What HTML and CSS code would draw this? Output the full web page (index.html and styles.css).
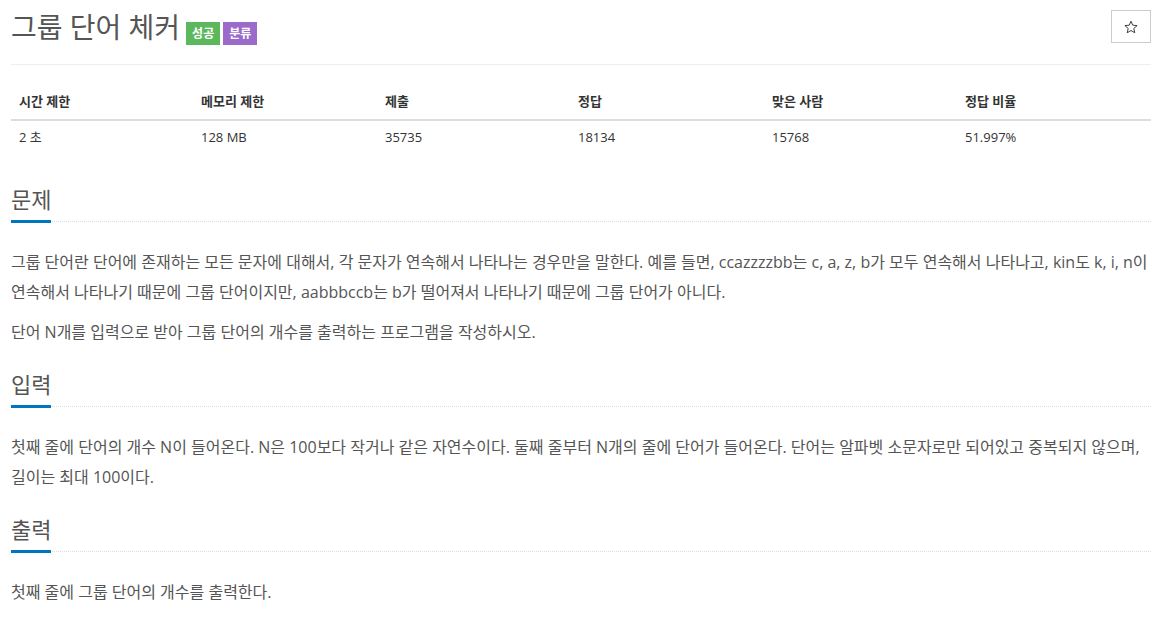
FILE: index.html
```html
<!DOCTYPE html>
<html lang="ko">
<head>
<meta charset="utf-8">
<title>그룹 단어 체커</title>
<link rel="stylesheet" href="styles.css">
</head>
<body>
<div class="container">
  <div class="page-header">
    <h1 class="title">
      <span class="title-text">그룹 단어 체커</span>
      <span class="label label-green">성공</span>
      <span class="label label-purple">분류</span>
    </h1>
    <button class="star-btn" type="button" aria-label="즐겨찾기">
      <svg width="14" height="14" viewBox="0 0 24 24"><polygon points="12,2 14.9,8.9 22.5,9.6 16.8,14.5 18.5,21.9 12,18 5.5,21.9 7.2,14.5 1.5,9.6 9.1,8.9" fill="none" stroke="#333" stroke-width="1.6" stroke-linejoin="miter"/></svg>
    </button>
  </div>

  <table class="info">
    <thead>
      <tr>
        <th class="c1">시간 제한</th>
        <th class="c2">메모리 제한</th>
        <th class="c3">제출</th>
        <th class="c4">정답</th>
        <th class="c5">맞은 사람</th>
        <th class="c6">정답 비율</th>
      </tr>
    </thead>
    <tbody>
      <tr>
        <td>2 초</td>
        <td>128 MB</td>
        <td>35735</td>
        <td>18134</td>
        <td>15768</td>
        <td>51.997%</td>
      </tr>
    </tbody>
  </table>

  <section class="section">
    <h2 class="headline"><span>문제</span></h2>
    <div class="text">
      <p>그룹 단어란 단어에 존재하는 모든 문자에 대해서, 각 문자가 연속해서 나타나는 경우만을 말한다. 예를 들면, ccazzzzbb는 c, a, z, b가 모두 연속해서 나타나고, kin도 k, i, n이 연속해서 나타나기 때문에 그룹 단어이지만, aabbbccb는 b가 떨어져서 나타나기 때문에 그룹 단어가 아니다.</p>
      <p>단어 N개를 입력으로 받아 그룹 단어의 개수를 출력하는 프로그램을 작성하시오.</p>
    </div>
  </section>

  <section class="section">
    <h2 class="headline"><span>입력</span></h2>
    <div class="text">
      <p>첫째 줄에 단어의 개수 N이 들어온다. N은 100보다 작거나 같은 자연수이다. 둘째 줄부터 N개의 줄에 단어가 들어온다. 단어는 알파벳 소문자로만 되어있고 중복되지 않으며, 길이는 최대 100이다.</p>
    </div>
  </section>

  <section class="section">
    <h2 class="headline"><span>출력</span></h2>
    <div class="text">
      <p>첫째 줄에 그룹 단어의 개수를 출력한다.</p>
    </div>
  </section>
</div>
</body>
</html>
```

FILE: styles.css
```css
* { box-sizing: border-box; }

html, body {
  margin: 0;
  padding: 0;
  background: #fff;
}

body {
  font-family: "Open Sans", "Noto Sans CJK KR", sans-serif;
  color: #333;
  font-size: 13px;
}

.container {
  width: 1140px;
  margin-left: 11px;
}

.page-header {
  display: flex;
  justify-content: space-between;
  align-items: flex-start;
  height: 65px;
  padding-top: 9px;
  border-bottom: 1px solid #eee;
}

.title {
  display: flex;
  align-items: flex-start;
  margin: 0;
  font-weight: normal;
}

.title-text {
  font-size: 28px;
  line-height: 36px;
  color: #555;
  margin-right: 6px;
}

.label {
  display: inline-block;
  margin-top: 13px;
  margin-right: 3px;
  height: 23px;
  min-width: 34px;
  padding: 0 6px;
  font-size: 12px;
  line-height: 23px;
  font-weight: bold;
  text-align: center;
  color: #fff;
}

.label-green { background: #5cb85c; }
.label-purple { background: #9b6bcc; }

.star-btn {
  width: 40px;
  height: 33px;
  margin-top: 1px;
  padding: 0;
  border: 1px solid #ccc;
  background: #fff;
  display: flex;
  align-items: center;
  justify-content: center;
  cursor: pointer;
}

.info {
  width: 1140px;
  margin-top: 18px;
  margin-bottom: 17px;
  border-collapse: collapse;
  border-spacing: 0;
}

.info th,
.info td {
  text-align: left;
  padding: 8px;
  line-height: 20px;
  font-size: 13px;
  color: #333;
}

.info td {
  padding-top: 6px;
}

.info th {
  font-weight: bold;
  border-bottom: 2px solid #ddd;
}

.c1 { width: 182px; }
.c2 { width: 184px; }
.c3 { width: 193px; }
.c4 { width: 194px; }
.c5 { width: 193px; }
.c6 { width: 194px; }

.section {
  padding-top: 12px;
}

.headline {
  margin: 0 0 25px;
  font-size: 22px;
  font-weight: normal;
  line-height: 30px;
  color: #555;
  border-bottom: 1px dotted #d6dee8;
}

.headline span {
  display: inline-block;
  padding-bottom: 6px;
  margin-bottom: -2px;
  border-bottom: 3px solid #0076c0;
}

.text {
  font-size: 16px;
  line-height: 30px;
  color: #555;
}

.text p {
  margin: 0 0 10px;
}
```
